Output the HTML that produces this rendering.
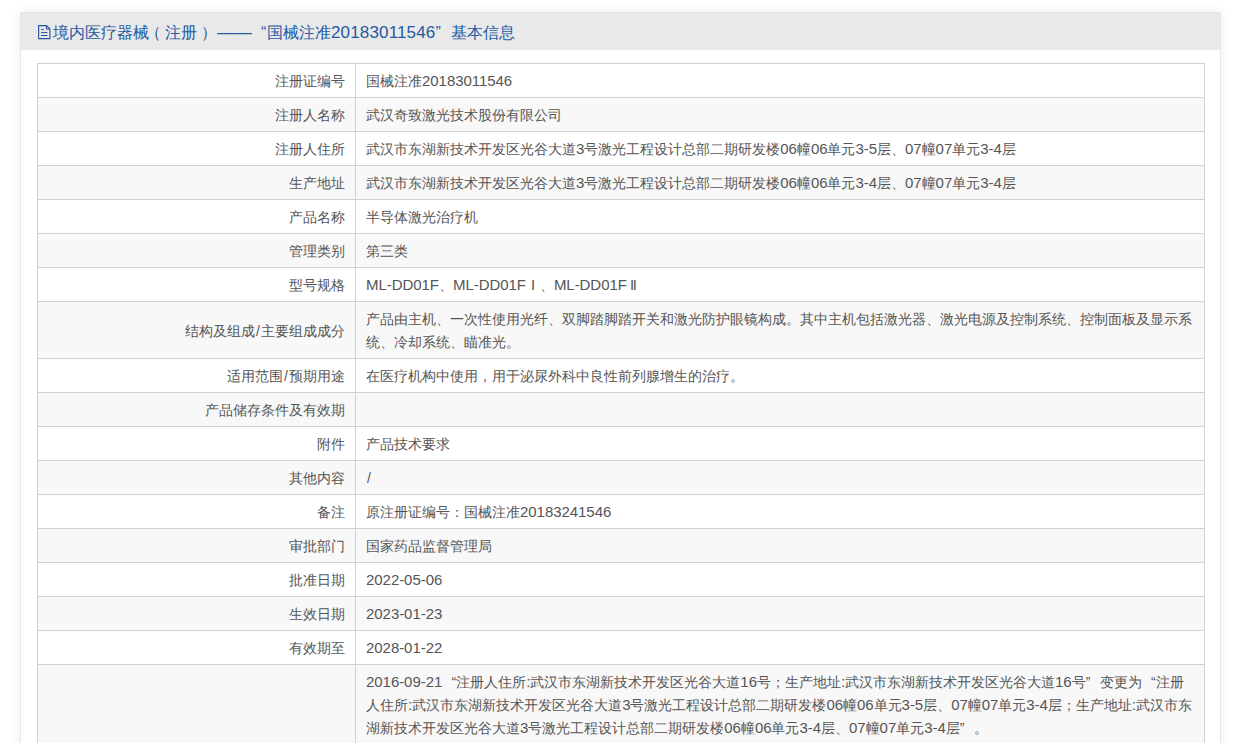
<!DOCTYPE html>
<html><head><meta charset="utf-8">
<style>
*{box-sizing:border-box}
html,body{margin:0;padding:0}
body{background:#fff;width:1236px;height:743px;overflow:hidden;position:relative;font-family:"Liberation Sans",sans-serif;}
.box{position:absolute;left:20px;top:12px;width:1201px;height:800px;background:#fff;border:1px solid #e6e6e6;box-shadow:0 0 12px rgba(0,0,0,0.07);}
.hd{position:absolute;left:0;top:0;width:1199px;height:37px;background:#e9e9e9;color:#2559a3;font-size:16px;white-space:nowrap}
.hd span{position:absolute;top:1px;line-height:38px}
.hd .n{position:static;letter-spacing:.15px;font-size:17px;line-height:38px}
.hd .pc{font-style:normal;position:relative}
.sl{letter-spacing:1px;margin-left:1px}
.ic{position:absolute;left:17px;top:12px}
table{position:absolute;left:16px;top:50px;width:1168px;border-collapse:collapse;font-size:14px;color:#555;}
td{border:1px solid #d1d1d1;line-height:23px;padding:6px 10px 4px 10px;vertical-align:middle;white-space:nowrap}
td.l{width:318px;text-align:right}
tr:nth-child(even) td{background:#f8f8f8}
.n{letter-spacing:-.05px;font-size:15px;line-height:16px}
.ql{display:inline-block;width:14px;text-align:right}
.qr{display:inline-block;width:14px;text-align:left}
.r1{display:inline-block;width:14px;text-align:center}
.r2{display:inline-block;width:14px;text-align:center}
</style></head><body>
<div class="box">
<div class="hd"><svg class="ic" width="14" height="15" viewBox="0 0 14 15"><path d="M0.6 0.6H8.4L11.9 4.1V13.6H0.6Z" fill="none" stroke="#2a55a0" stroke-width="1.15"/><path d="M8.4 0.6V4.1H11.9" fill="none" stroke="#2a55a0" stroke-width="1"/><path d="M3 4.6H5.6M3 7.6H9.5M3 10.5H9.5" stroke="#2a55a0" stroke-width="1"/></svg><span style="left:32px">境内医疗器械<i class="pc" style="left:-4px">（</i>注册<i class="pc" style="left:4px">）</i></span><span style="left:196px;display:inline-block;transform:scaleX(1.09);transform-origin:0 0">——</span><span style="left:240px">“</span><span style="left:246px">国械注准<span class="n">20183011546</span>”</span><span style="left:430px">基本信息</span></div>
<table>
<tr><td class="l">注册证编号</td><td class="v">国械注准<span class="n">20183011546</span></td></tr>
<tr><td class="l">注册人名称</td><td class="v">武汉奇致激光技术股份有限公司</td></tr>
<tr><td class="l">注册人住所</td><td class="v">武汉市东湖新技术开发区光谷大道<span class="n">3</span>号激光工程设计总部二期研发楼<span class="n">06</span>幢<span class="n">06</span>单元<span class="n">3-5</span>层、<span class="n">07</span>幢<span class="n">07</span>单元<span class="n">3-4</span>层</td></tr>
<tr><td class="l">生产地址</td><td class="v">武汉市东湖新技术开发区光谷大道<span class="n">3</span>号激光工程设计总部二期研发楼<span class="n">06</span>幢<span class="n">06</span>单元<span class="n">3-4</span>层、<span class="n">07</span>幢<span class="n">07</span>单元<span class="n">3-4</span>层</td></tr>
<tr><td class="l">产品名称</td><td class="v">半导体激光治疗机</td></tr>
<tr><td class="l">管理类别</td><td class="v">第三类</td></tr>
<tr><td class="l">型号规格</td><td class="v"><span class="n">ML-DD01F</span>、<span class="n">ML-DD01F</span><span class="r1">Ⅰ</span>、<span class="n">ML-DD01F</span><span class="r2">Ⅱ</span></td></tr>
<tr><td class="l">结构及组成<span class="sl">/</span>主要组成成分</td><td class="v">产品由主机、一次性使用光纤、双脚踏脚踏开关和激光防护眼镜构成。其中主机包括激光器、激光电源及控制系统、控制面板及显示系<br>统、冷却系统、瞄准光。</td></tr>
<tr><td class="l">适用范围<span class="sl">/</span>预期用途</td><td class="v">在医疗机构中使用，用于泌尿外科中良性前列腺增生的治疗。</td></tr>
<tr><td class="l">产品储存条件及有效期</td><td class="v"></td></tr>
<tr><td class="l">附件</td><td class="v">产品技术要求</td></tr>
<tr><td class="l">其他内容</td><td class="v"><span class="sl">/</span></td></tr>
<tr><td class="l">备注</td><td class="v">原注册证编号：国械注准<span class="n">20183241546</span></td></tr>
<tr><td class="l">审批部门</td><td class="v">国家药品监督管理局</td></tr>
<tr><td class="l">批准日期</td><td class="v"><span class="n">2022-05-06</span></td></tr>
<tr><td class="l">生效日期</td><td class="v"><span class="n">2023-01-23</span></td></tr>
<tr><td class="l">有效期至</td><td class="v"><span class="n">2028-01-22</span></td></tr>
<tr><td class="l"></td><td class="v"><span class="n">2016-09-21</span><span class="ql">“</span>注册人住所<span class="n">:</span>武汉市东湖新技术开发区光谷大道<span class="n">16</span>号；生产地址<span class="n">:</span>武汉市东湖新技术开发区光谷大道<span class="n">16</span>号<span class="qr">”</span>变更为<span class="ql">“</span>注册<br>人住所<span class="n">:</span>武汉市东湖新技术开发区光谷大道<span class="n">3</span>号激光工程设计总部二期研发楼<span class="n">06</span>幢<span class="n">06</span>单元<span class="n">3-5</span>层、<span class="n">07</span>幢<span class="n">07</span>单元<span class="n">3-4</span>层；生产地址<span class="n">:</span>武汉市东<br>湖新技术开发区光谷大道<span class="n">3</span>号激光工程设计总部二期研发楼<span class="n">06</span>幢<span class="n">06</span>单元<span class="n">3-4</span>层、<span class="n">07</span>幢<span class="n">07</span>单元<span class="n">3-4</span>层<span class="qr">”</span>。</td></tr>
</table>
</div>
</body></html>
